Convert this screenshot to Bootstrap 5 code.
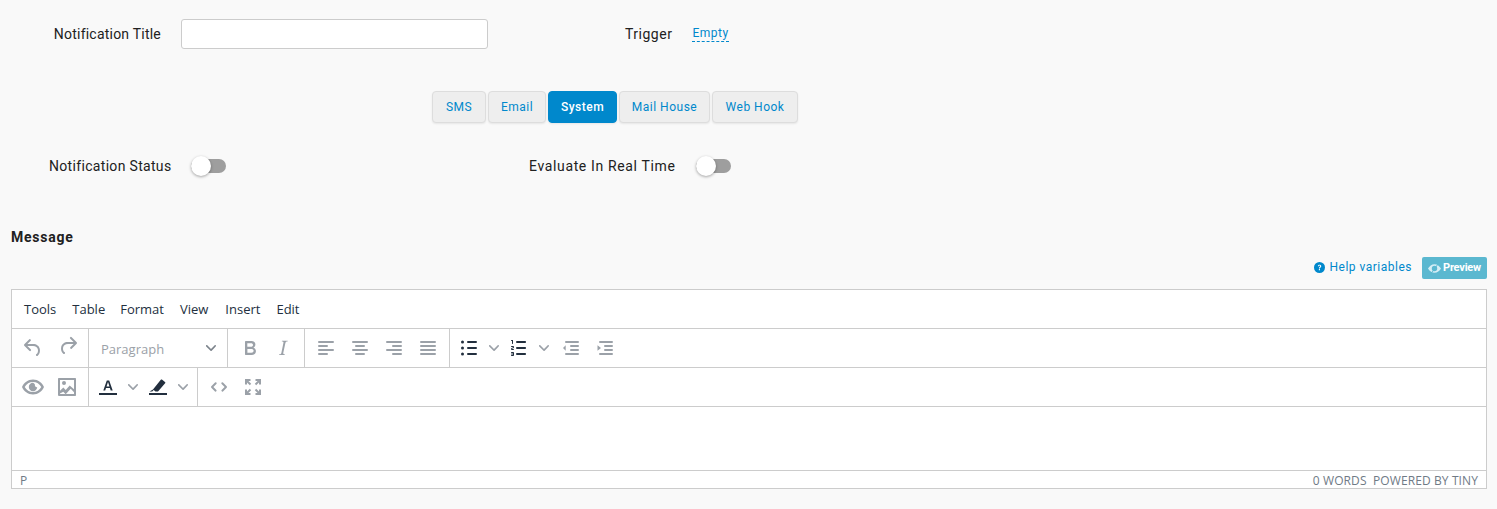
<!DOCTYPE html>
<html lang="en">
<head>
<meta charset="utf-8">
<title>Notification</title>
<link href="https://cdn.jsdelivr.net/npm/bootstrap@5.3.0/dist/css/bootstrap.min.css" rel="stylesheet">
<style>
html,body{height:509px;overflow:hidden}
body{background:#f9f9f9;font-family:Roboto,"Liberation Sans",sans-serif;font-size:14px;letter-spacing:.5px;color:#212121}
.page-wrap{padding:19px 10px 0 11px}
.lbl-title{width:150px;text-align:right;margin-right:20px;letter-spacing:.22px;white-space:nowrap}
.title-input{width:307px;height:30px;border:1px solid #ccc;border-radius:3px;background:#fff;padding:0 8px}
.lbl-trigger{margin-left:137px;margin-right:20px}
.empty-link{font-size:12px;color:#0088cc;text-decoration:none;border-bottom:1px dashed #0088cc;line-height:15px}
.tab-row{margin-top:42px;margin-left:421px;gap:2px}
.tab-btn{height:32px;font-size:12px;letter-spacing:.5px;color:#0088cc;background:#eee;border:1px solid #ddd;border-radius:4px;padding:0;box-shadow:0 1px 2px rgba(0,0,0,.08)}
.tab-btn.is-on{background:#0088cc;border-color:#0088cc;color:#fff;font-weight:500}
.tw-sms{width:54px}.tw-email{width:58px}.tw-system{width:69px}.tw-mail{width:91px}.tw-hook{width:86px}
.status-row{margin-top:28px;height:30px}
.lbl-status{margin-left:38px;width:122px;white-space:nowrap;letter-spacing:.32px}
.lbl-real{margin-left:303px;width:147px;white-space:nowrap;letter-spacing:.64px}
.toggle-track{position:relative;display:block;width:35px;height:14px;margin-left:20px;border-radius:7px;background:#9e9e9e}
.toggle-knob{position:absolute;left:0;top:-3px;width:20px;height:20px;border-radius:50%;background:#fff;box-shadow:0 1px 3px rgba(0,0,0,.35)}
.msg-head{margin-top:47px;font-size:14px;font-weight:700;letter-spacing:.75px;line-height:18px}
.help-row{margin-top:11px;height:22px;gap:10px}
.help-link{font-size:12px;color:#0088cc;text-decoration:none;display:flex;align-items:center;gap:4px;padding-bottom:2px}
.preview-btn{width:65px;height:22px;padding-top:1px;font-size:11px;font-weight:700;letter-spacing:-.2px;color:#fff;background:#5bb8d0;border-radius:2px;gap:2px}
.tox-box{margin-top:10px;border:1px solid #ccc;background:#fff;width:1476px;font-family:"Open Sans","Noto Sans",sans-serif;letter-spacing:0;color:#222f3e}
.menu-line{height:39px;padding:1px 0 0 4px;border-bottom:1px solid #ccc;font-size:13px}
.menu-item{padding:0 8px}
.menu-item.tight{padding-right:7px}
.menu-item.roomy{padding-right:9px}
.tool-line{height:39px;border-bottom:1px solid #ccc}
.tool-grp{height:38px;padding:0 4px;border-right:1px solid #ccc}
.tool-grp.list-grp{border-right:0;padding-left:2px}
.tool-grp.color-grp{padding:0 6px 0 2px}
.tool-grp.no-rule{border-right:0}
.ib{width:34px;height:34px;display:flex;align-items:center;justify-content:center;fill:#9ba1a8;flex:none}
.ib.tone-dark{fill:#222f3e}
.ib.narrow{width:16px}
.ib.narrow svg{width:10px;height:10px}
.nudge-3{margin-left:3px}
.shift-r{transform:translateX(1px)}
.para-select{width:139px;height:38px;padding:0 11px 0 12px;font-size:13px;color:#9ba1a8;border-right:1px solid #ccc;fill:#7d848c}
.para-select span{padding-top:3px}
.para-select svg{width:10px;height:10px}
.edit-area{height:64px;border-bottom:1px solid #ccc}
.status-line{height:17px;padding:1px 8px 0;font-size:12px;letter-spacing:.1px;color:#6f7a86;text-transform:uppercase;line-height:17px}
</style>
</head>
<body>
<svg width="0" height="0" class="d-none" aria-hidden="true">
<symbol id="i-chev" viewBox="0 0 10 10"><path d="M8.7 2.2c.3-.3.8-.3 1 0 .4.4.4.9 0 1.2L5.7 7.8c-.3.3-.9.3-1.2 0L.2 3.4a.8.8 0 010-1.2c.3-.3.8-.3 1.1 0L5 6l3.7-3.8z"/></symbol>
</svg>
<main class="page-wrap">
  <div class="d-flex align-items-center">
    <label class="lbl-title" for="nt">Notification Title</label>
    <input id="nt" class="title-input" type="text">
    <span class="lbl-trigger">Trigger</span>
    <a class="empty-link" href="#">Empty</a>
  </div>

  <div class="d-flex tab-row">
    <button class="tab-btn tw-sms" type="button">SMS</button>
    <button class="tab-btn tw-email" type="button">Email</button>
    <button class="tab-btn tw-system is-on" type="button">System</button>
    <button class="tab-btn tw-mail" type="button">Mail House</button>
    <button class="tab-btn tw-hook" type="button">Web Hook</button>
  </div>

  <div class="d-flex align-items-center status-row">
    <span class="lbl-status">Notification Status</span>
    <span class="toggle-track"><span class="toggle-knob"></span></span>
    <span class="lbl-real">Evaluate In Real Time</span>
    <span class="toggle-track"><span class="toggle-knob"></span></span>
  </div>

  <div class="msg-head">Message</div>

  <div class="d-flex justify-content-end align-items-center help-row">
    <a class="help-link" href="#"><svg width="11" height="11" viewBox="0 0 12 12"><circle cx="6" cy="6" r="6" fill="#0088cc"/><path d="M4.200 4.600C4.300 3.600 5 3 6 3s1.900.6 1.900 1.600c0 1.300-1.400 1.300-1.400 2.400H5.400c0-1.700 1.300-1.600 1.300-2.400 0-.4-.3-.7-.7-.7s-.7.3-.7.7zM5.300 7.600h1.200v1.300H5.300z" fill="#fff"/></svg>Help variables</a>
    <span class="preview-btn d-flex align-items-center justify-content-center"><svg width="13" height="11" viewBox="0 0 24 20"><path d="M12 2C7 2 2.500 5.500 0 10c2.500 4.500 7 8 12 8s9.500-3.500 12-8c-2.500-4.500-7-8-12-8zm0 13a5 5 0 110-10 5 5 0 010 10z" fill="#d5eef5"/><path d="M6 19L19 1" stroke="#5bb8d0" stroke-width="1.800"/></svg>Preview</span>
  </div>

  <div class="tox-box">
    <div class="d-flex align-items-center menu-line">
      <span class="menu-item">Tools</span><span class="menu-item tight">Table</span><span class="menu-item">Format</span><span class="menu-item roomy">View</span><span class="menu-item">Insert</span><span class="menu-item">Edit</span>
    </div>

    <div class="d-flex tool-line">
      <div class="d-flex align-items-center tool-grp">
        <span class="ib"><svg width="24" height="24" viewBox="0 0 24 24"><path d="M6.400 8H12c3.700 0 6.200 2 6.800 5.100.6 2.700-.4 5.600-2.300 6.800a1 1 0 01-1-1.800c1.100-.6 1.800-2.700 1.400-4.600-.5-2.100-2.100-3.500-4.900-3.500H6.400l3.300 3.300a1 1 0 11-1.400 1.400l-5-5a1 1 0 010-1.400l5-5a1 1 0 011.400 1.400L6.400 8z"/></svg></span>
        <span class="ib shift-r"><svg width="24" height="24" viewBox="0 0 24 24"><path d="M17.600 10H12c-2.800 0-4.400 1.400-4.900 3.500-.4 2 .3 4 1.400 4.600a1 1 0 11-1 1.800c-2-1.200-2.900-4.100-2.300-6.800.6-3 3-5.100 6.800-5.100h5.600l-3.300-3.300a1 1 0 111.400-1.400l5 5a1 1 0 010 1.400l-5 5a1 1 0 01-1.400-1.400l3.300-3.300z" transform="translate(0 -2)"/></svg></span>
      </div>
      <div class="d-flex align-items-center justify-content-between para-select"><span>Paragraph</span><svg viewBox="0 0 10 10"><use href="#i-chev"/></svg></div>
      <div class="d-flex align-items-center tool-grp">
        <span class="ib shift-r"><svg width="24" height="24" viewBox="0 0 24 24"><path d="M7.800 19c-.3 0-.5 0-.6-.2l-.2-.5V5.700c0-.2 0-.4.2-.5l.6-.2h5c1.500 0 2.700.3 3.500 1 .7.6 1.100 1.400 1.100 2.500a3 3 0 01-.6 1.900c-.4.6-1 1-1.600 1.200.4.1.9.3 1.300.6s.8.7 1 1.200c.3.4.4 1 .4 1.600 0 1.300-.4 2.300-1.300 3-.8.7-2.100 1-3.800 1H7.800zm5-8.300c.6 0 1.200-.1 1.600-.5.4-.3.6-.7.6-1.300 0-1.100-.8-1.700-2.300-1.700H9.300v3.500h3.400zm.5 6c.7 0 1.300-.1 1.700-.4.4-.4.6-.9.6-1.500s-.2-1-.7-1.400c-.4-.3-1-.4-2-.4H9.400v3.800h4z" fill-rule="evenodd"/></svg></span>
        <span class="ib"><svg width="24" height="24" viewBox="0 0 24 24"><path d="M16.700 4.700l-.1.9h-.3c-.6 0-1 0-1.400.3-.3.3-.4.6-.5 1.100l-2.100 9.800v.6c0 .5.4.8 1.400.8h.2l-.2.8H8l.2-.8h.2c1.100 0 1.800-.5 2-1.500l2-9.800.1-.5c0-.6-.4-.8-1.400-.8h-.3l.2-.9h5.800z" fill-rule="evenodd"/></svg></span>
      </div>
      <div class="d-flex align-items-center tool-grp">
        <span class="ib"><svg width="24" height="24" viewBox="0 0 24 24"><path d="M5 5h14a1 1 0 010 2H5a1 1 0 110-2zm0 4h8a1 1 0 010 2H5a1 1 0 110-2zm0 8h8a1 1 0 010 2H5a1 1 0 010-2zm0-4h14a1 1 0 010 2H5a1 1 0 010-2z"/></svg></span>
        <span class="ib"><svg width="24" height="24" viewBox="0 0 24 24"><path d="M5 5h14a1 1 0 010 2H5a1 1 0 110-2zm3 4h8a1 1 0 010 2H8a1 1 0 110-2zm0 8h8a1 1 0 010 2H8a1 1 0 010-2zm-3-4h14a1 1 0 010 2H5a1 1 0 010-2z"/></svg></span>
        <span class="ib"><svg width="24" height="24" viewBox="0 0 24 24"><path d="M5 5h14a1 1 0 010 2H5a1 1 0 110-2zm6 4h8a1 1 0 010 2h-8a1 1 0 010-2zm0 8h8a1 1 0 010 2h-8a1 1 0 010-2zm-6-4h14a1 1 0 010 2H5a1 1 0 010-2z"/></svg></span>
        <span class="ib"><svg width="24" height="24" viewBox="0 0 24 24"><path d="M5 5h14a1 1 0 010 2H5a1 1 0 110-2zm0 4h14a1 1 0 010 2H5a1 1 0 110-2zm0 4h14a1 1 0 010 2H5a1 1 0 010-2zm0 4h14a1 1 0 010 2H5a1 1 0 010-2z"/></svg></span>
      </div>
      <div class="d-flex align-items-center tool-grp list-grp">
        <span class="ib tone-dark"><svg width="24" height="24" viewBox="0 0 24 24"><path d="M11 5h8a1 1 0 010 2h-8a1 1 0 010-2zm0 6h8a1 1 0 010 2h-8a1 1 0 010-2zm0 6h8a1 1 0 010 2h-8a1 1 0 010-2z"/><circle cx="5.500" cy="6" r="1.500"/><circle cx="5.500" cy="12" r="1.500"/><circle cx="5.500" cy="18" r="1.500"/></svg></span>
        <span class="ib narrow"><svg viewBox="0 0 10 10"><use href="#i-chev"/></svg></span>
        <span class="ib tone-dark"><svg width="24" height="24" viewBox="0 0 24 24"><path d="M10 17h8c.6 0 1 .4 1 1s-.4 1-1 1h-8a1 1 0 010-2zm0-6h8c.6 0 1 .4 1 1s-.4 1-1 1h-8a1 1 0 010-2zm0-6h8c.6 0 1 .4 1 1s-.4 1-1 1h-8a1 1 0 110-2zM6 4v3.500c0 .3-.2.5-.5.5a.5.5 0 01-.5-.5V5h-.5a.5.5 0 010-1H6zm-1 8.800l.2.2h1.300c.3 0 .5.2.5.5s-.2.5-.5.5H4.900a1 1 0 01-.9-1V13c0-.4.3-.8.6-1l1.200-.4.2-.3a.2.2 0 00-.2-.2H4.500a.5.5 0 01-.5-.5c0-.3.2-.5.5-.5h1.600c.5 0 .9.4.9 1v.1c0 .4-.3.8-.6 1l-1.200.4-.2.3zM7 17v2c0 .6-.4 1-1 1H4.500a.5.5 0 010-1h1.200c.2 0 .3-.1.3-.3 0-.2-.1-.3-.3-.3H4.400a.4.4 0 110-.8h1.300c.2 0 .3-.1.3-.3 0-.2-.1-.3-.3-.3H4.500a.5.5 0 110-1H6c.6 0 1 .4 1 1z"/></svg></span>
        <span class="ib narrow"><svg viewBox="0 0 10 10"><use href="#i-chev"/></svg></span>
        <span class="ib nudge-3"><svg width="24" height="24" viewBox="0 0 24 24"><path d="M7 5h12a1 1 0 010 2H7a1 1 0 110-2zm5 4h7a1 1 0 010 2h-7a1 1 0 010-2zm0 4h7a1 1 0 010 2h-7a1 1 0 010-2zm-5 4h12a1 1 0 010 2H7a1 1 0 010-2zm-.3-7.800L4 12l2.700 2.800V9.200z" transform="translate(-1 0)"/></svg></span>
        <span class="ib"><svg width="24" height="24" viewBox="0 0 24 24"><path d="M7 5h12a1 1 0 010 2H7a1 1 0 110-2zm5 4h7a1 1 0 010 2h-7a1 1 0 010-2zm0 4h7a1 1 0 010 2h-7a1 1 0 010-2zm-5 4h12a1 1 0 010 2H7a1 1 0 010-2zM4.500 9.200v5.600L8 12 4.500 9.200z" transform="translate(-1 0)"/></svg></span>
      </div>
    </div>

    <div class="d-flex tool-line">
      <div class="d-flex align-items-center tool-grp">
        <span class="ib"><svg width="24" height="24" viewBox="0 0 24 24"><path d="M12 4.500C7 4.500 2.700 7.700 1 12c1.700 4.300 6 7.500 11 7.500s9.300-3.200 11-7.500c-1.700-4.300-6-7.500-11-7.500zm0 12.500c-3.500 0-6.600-1.900-8.300-5C5.400 8.900 8.500 7 12 7s6.600 1.900 8.300 5c-1.700 3.100-4.800 5-8.300 5zm0-9.200a4.200 4.200 0 104.200 4.200 1.700 1.700 0 01-2.200-2.200 4.200 4.200 0 00-2-2z"/></svg></span>
        <span class="ib"><svg width="24" height="24" viewBox="0 0 24 24"><path d="M5 15.700l3.300-3.200 2.400 2.400 4-4.300L19 14.300V5H5v10.700zm0 2.800V19h14v-1.800l-3.300-3.400-5 5.400-2.400-2.400L5 18.500zM3 4c0-.6.400-1 1-1h16c.6 0 1 .4 1 1v16c0 .6-.4 1-1 1H4a1 1 0 01-1-1V4zm6 6a2 2 0 110-4 2 2 0 010 4z" fill-rule="evenodd"/></svg></span>
      </div>
      <div class="d-flex align-items-center tool-grp color-grp">
        <span class="ib tone-dark"><svg width="24" height="24" viewBox="0 0 24 24"><path d="M3 18h18v2H3z"/><path d="M7.300 15.500l3.500-10h2.400l3.500 10h-2l-.8-2.500H10l-.8 2.500h-1.900zm3.200-4.100h3l-1.500-4.500-1.500 4.500z"/></svg></span>
        <span class="ib narrow"><svg viewBox="0 0 10 10"><use href="#i-chev"/></svg></span>
        <span class="ib tone-dark"><svg width="24" height="24" viewBox="0 0 24 24"><path d="M3 18h18v2H3z"/><path d="M7 14.500L14.800 4.800c.4-.4 1-.5 1.400-.1l2.800 2.200c.4.400.5 1 .1 1.400L12 16.500H9.500L7.700 15l-1.500 1.500H3.500L7 14.500z"/></svg></span>
        <span class="ib narrow"><svg viewBox="0 0 10 10"><use href="#i-chev"/></svg></span>
      </div>
      <div class="d-flex align-items-center tool-grp no-rule">
        <span class="ib"><svg width="24" height="24" viewBox="0 0 24 24"><path d="M9.400 7.600a1 1 0 00-1.400 0l-3.700 3.700a1 1 0 000 1.400L8 16.400a1 1 0 001.400-1.400l-3-3 3-3a1 1 0 000-1.400zm5.200 0a1 1 0 011.400 0l3.700 3.700a1 1 0 010 1.400L16 16.400a1 1 0 01-1.400-1.400l3-3-3-3a1 1 0 010-1.400z"/></svg></span>
        <span class="ib"><svg width="24" height="24" viewBox="0 0 24 24"><path d="M4 4h5.500v2H7.400l2.800 2.800-1.400 1.400L6 7.400v2.100H4V4zm16 0v5.500h-2V7.400l-2.800 2.800-1.400-1.400L16.600 6h-2.100V4H20zM4 20v-5.500h2v2.100l2.800-2.800 1.400 1.400L7.400 18h2.100v2H4zm16 0h-5.500v-2h2.100l-2.800-2.800 1.400-1.400 2.800 2.800v-2.100h2V20z"/></svg></span>
      </div>
    </div>

    <div class="edit-area"></div>

    <div class="d-flex justify-content-between status-line">
      <span>p</span>
      <span>0 words&nbsp; Powered by Tiny</span>
    </div>
  </div>
</main>
</body>
</html>
